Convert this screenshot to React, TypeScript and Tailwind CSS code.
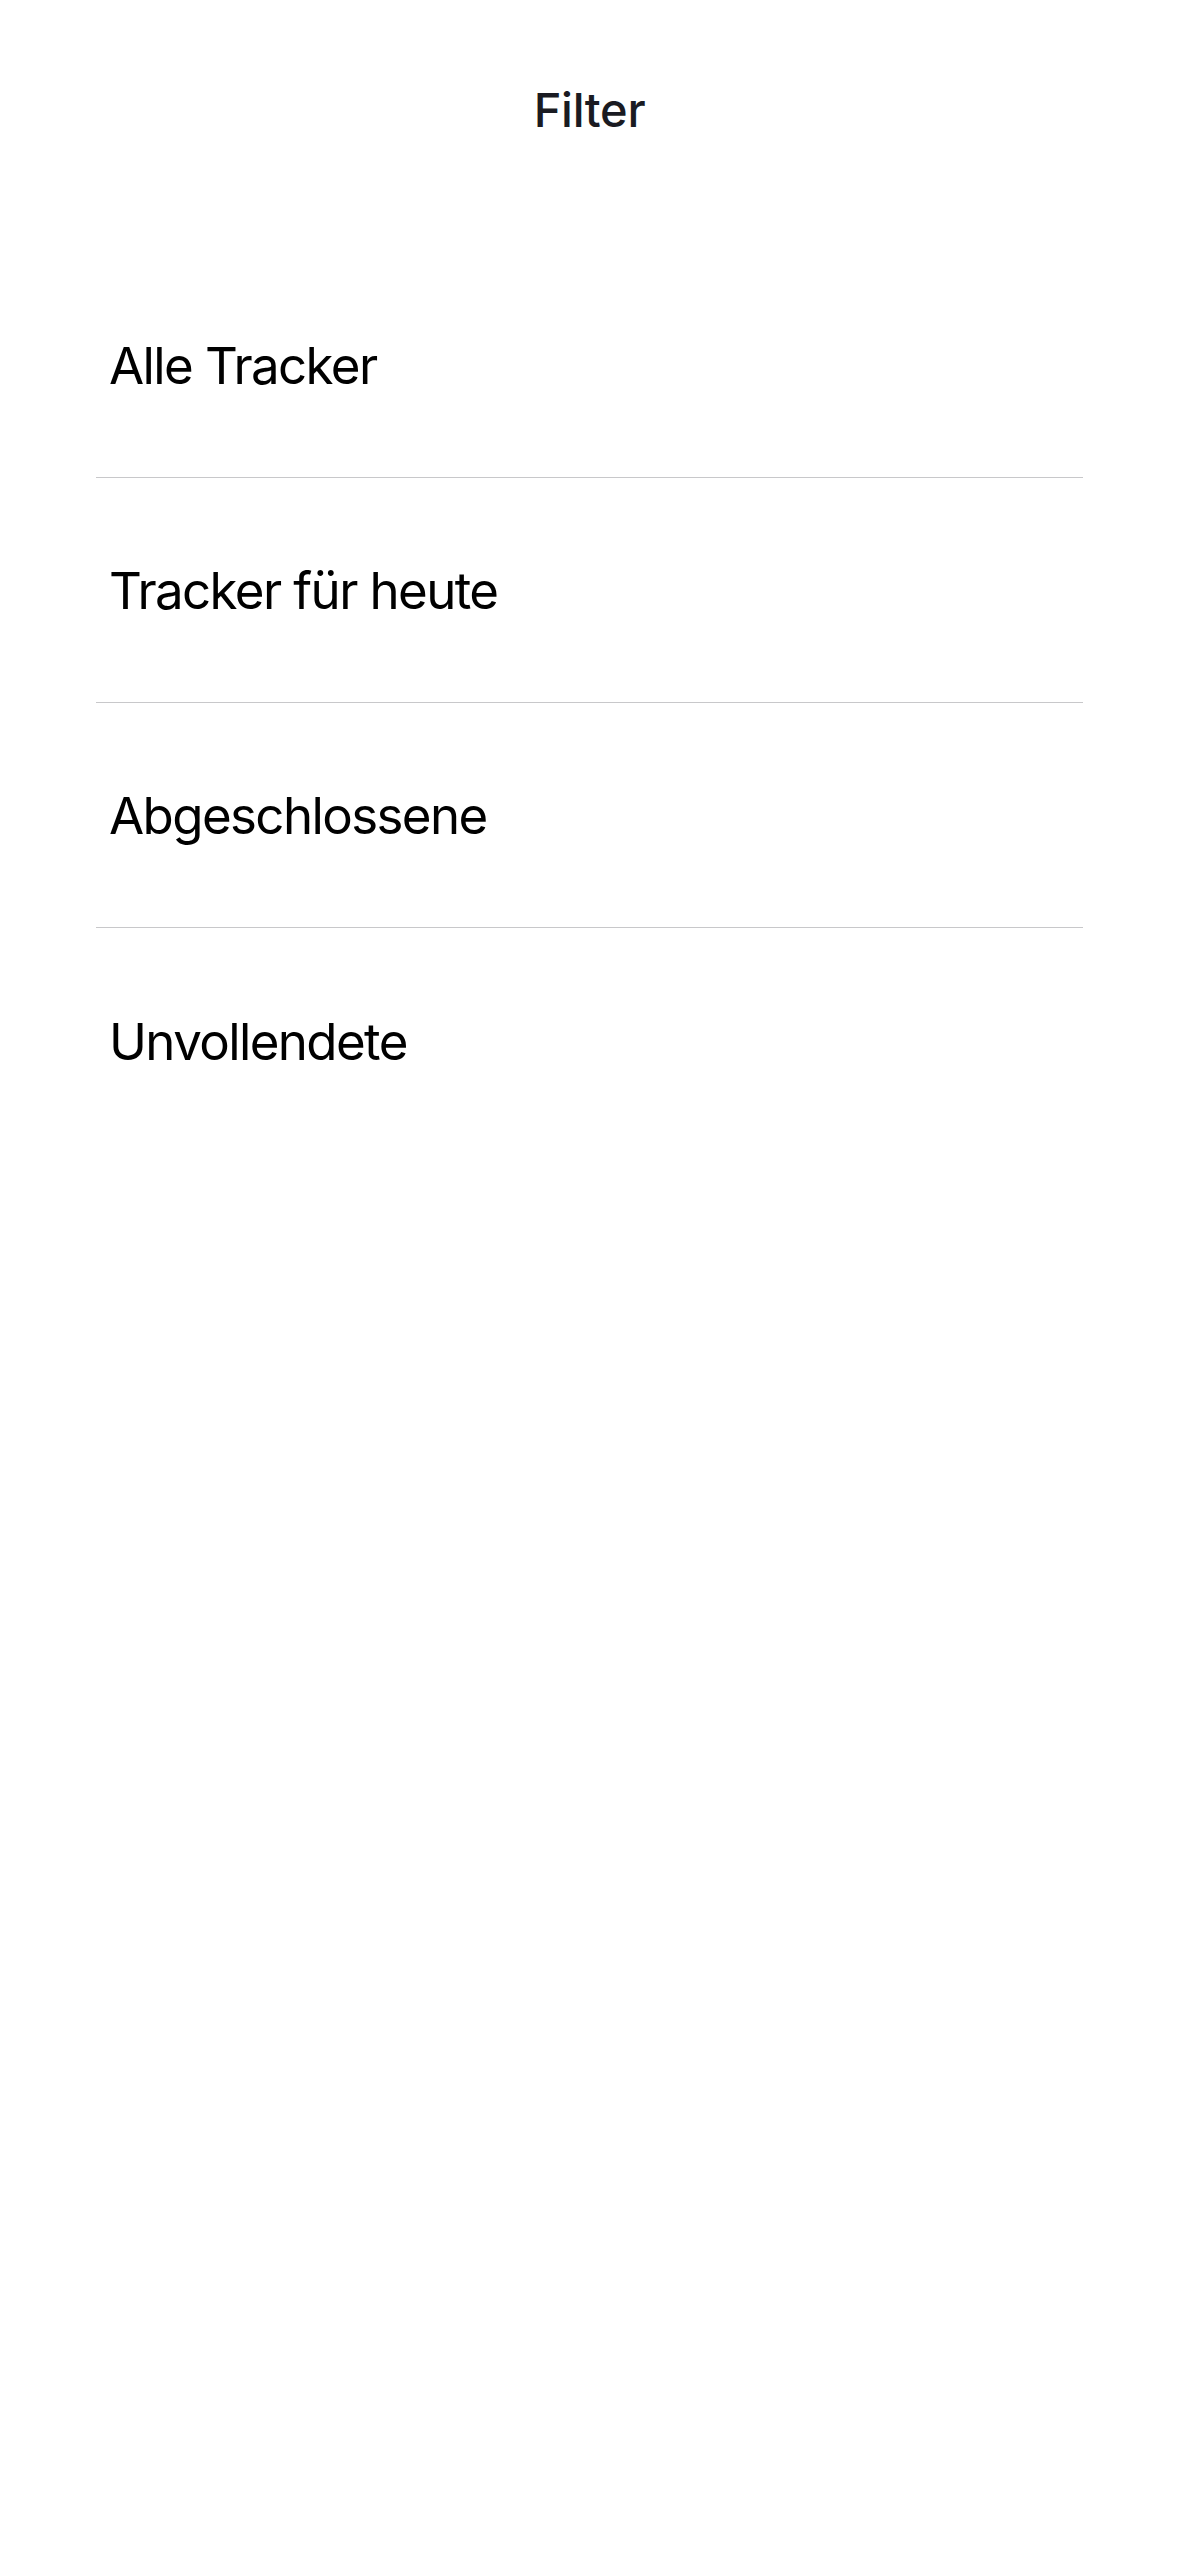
const filters = ["Alle Tracker", "Tracker für heute", "Abgeschlossene", "Unvollendete"];

export default function App() {
  return (
    <div className="min-h-[2556px] w-full bg-white" style={{ fontFamily: "Inter, 'Noto Sans', sans-serif" }}>
      {/* Title */}
      <div className="pt-[86px] text-center">
        <h1 className="text-[47px] leading-[47px] font-medium text-[#1a1b22] tracking-[-0.3px]">Filter</h1>
      </div>

      {/* Filter list */}
      <ul className="mt-[120px] px-[96px]">
        {filters.map((f, i) => (
          <li
            key={f}
            className={`flex h-[225px] items-center pl-[13px] ${i < filters.length - 1 ? "border-b border-[#c8c8ca]" : ""}`}
          >
            <span className="pt-[2px] text-[51px] leading-[62px] text-black tracking-[-1.6px]">{f}</span>
          </li>
        ))}
      </ul>
    </div>
  );
}
